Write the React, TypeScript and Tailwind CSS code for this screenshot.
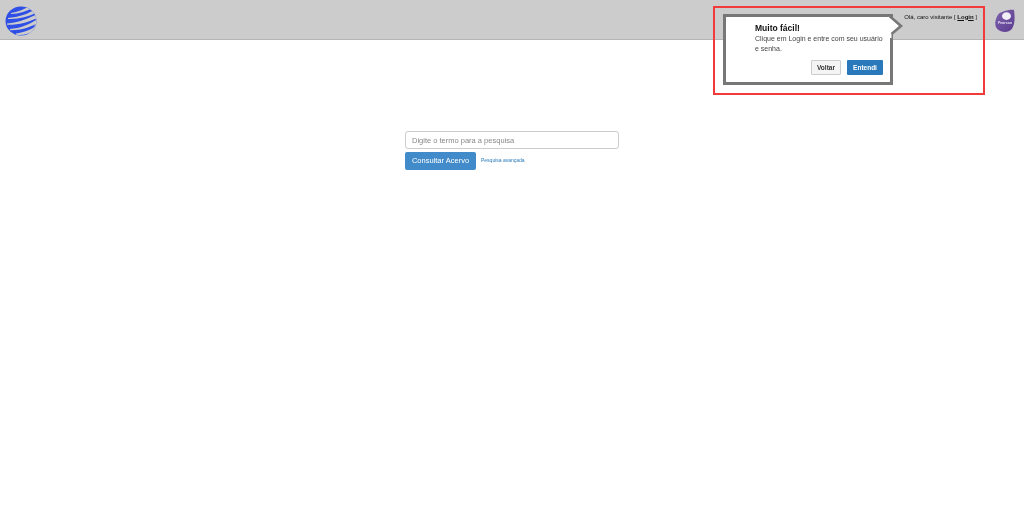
export default function App() {
  return (
    <div className="relative w-[1024px] h-[508px] overflow-hidden bg-white font-['Liberation_Sans',sans-serif] blur-[0.4px]">
      <header className="h-[40px] bg-[#cccccc] border-b border-[#b4b4b4] flex items-center justify-between pl-[5px] pr-[9px]">
        <svg width="33" height="30" viewBox="0 0 33 30" className="mt-[2px]">
          <defs>
            <clipPath id="globe"><ellipse cx="16" cy="15" rx="15.5" ry="14.5" /></clipPath>
            <linearGradient id="purple" x1="0" y1="0" x2="1" y2="1">
              <stop offset="0" stopColor="#7d63ad" />
              <stop offset="1" stopColor="#5b3a8e" />
            </linearGradient>
          </defs>
          <g clipPath="url(#globe)">
            <rect x="0" y="0" width="33" height="30" fill="#2f4fe6" />
            <g fill="#cccccc">
              <path d="M6 7 C13 6 20 3 26 -1 L30 1 C22 5 14 8 6 8 Z" />
              <path d="M3 12 C14 11.5 24 7.5 33 2 L34 5.5 C24 10.5 14 13.5 3 13 Z" />
              <path d="M2 17.5 C15 16.5 25 12 34 7 L35 10.5 C25 15.5 15 19 2 18.7 Z" />
              <path d="M5 23 C17 22 26 17.5 35 11.5 L36 15.5 C26 21 17 24.5 5 24.3 Z" />
              <path d="M11 27.5 C21 26.5 29 22 35 17.5 L36 21.5 C29 26 21 29.5 11 28.8 Z" />
            </g>
            <path d="M31 0 L33 0 L33 30 L27 30 L31 24 L29 20 L32 16 L30 12 L33 9 L29 6 Z" fill="#cccccc" opacity="0.6" />
          </g>
        </svg>
        <div className="flex items-center gap-[17px]">
          <span className="text-[6px] leading-none text-[#111] mb-[6px]">
            Olá, caro visitante [ <span className="font-bold underline">Login</span> ]
          </span>
          <svg width="21" height="23" viewBox="0 0 21 21" preserveAspectRatio="none" className="mt-[1px]">
            <path d="M5 4 C9 2 17 0 20 1 C21 7 21 14 18 18 C14 22 8 22 3 18 C0 15 1 8 5 4 Z" fill="url(#purple)" />
            <ellipse cx="12.5" cy="6.5" rx="4.5" ry="3.5" fill="#f1eef7" />
            <text x="11" y="13.5" textAnchor="middle" fontSize="3.6" fontWeight="700" fill="#e6e0f2">Pearson</text>
          </svg>
        </div>
      </header>

      <main className="w-[214px] mx-auto mt-[91px]">
        <input
          readOnly
          placeholder="Digite o termo para a pesquisa"
          className="block w-[214px] h-[18px] border border-[#cccccc] rounded-[3px] px-[6px] text-[7.5px] placeholder:text-[#888] outline-none"
        />
        <div className="flex items-center gap-[5px] mt-[3px]">
          <button className="w-[71px] h-[18px] bg-[#428bca] rounded-[2px] text-white text-[7.5px]">
            Consultar Acervo
          </button>
          <a className="text-[5px] text-[#2a7abb]">Pesquisa avançada</a>
        </div>
      </main>

      <div className="absolute left-[713px] top-[6px] w-[272px] h-[89px] border-2 border-[#f23a3a]" />

      <div className="absolute left-[723px] top-[14px] w-[170px] h-[71px] bg-white border-[3px] border-[#777777] pl-[29px] pr-[7px] pt-[5px]">
        <div className="text-[8.5px] leading-[12px] font-bold text-[#111]">Muito fácil!</div>
        <p className="w-[129px] text-[7px] leading-[9.5px] text-[#444]">
          Clique em Login e entre com seu usuário e senha.
        </p>
        <div className="flex justify-end gap-[6px] mt-[7px]">
          <button className="w-[30px] h-[15px] bg-[#f4f4f4] border border-[#cccccc] rounded-[1px] text-[6.5px] font-bold text-[#333]">Voltar</button>
          <button className="w-[36px] h-[15px] bg-[#2a7abb] rounded-[1px] text-[6.5px] font-bold text-white">Entendi</button>
        </div>
      </div>
      <svg width="20" height="24" viewBox="0 0 20 24" className="absolute left-[885px] top-[14px]">
        <path d="M3 1.5 L16 12 L6.5 20 L6.5 24 L3 24 Z" fill="white" />
        <path d="M3 1.5 L4 1.5 L16 12 L6.5 20" fill="none" stroke="#777777" strokeWidth="2.6" />
      </svg>
    </div>
  );
}
